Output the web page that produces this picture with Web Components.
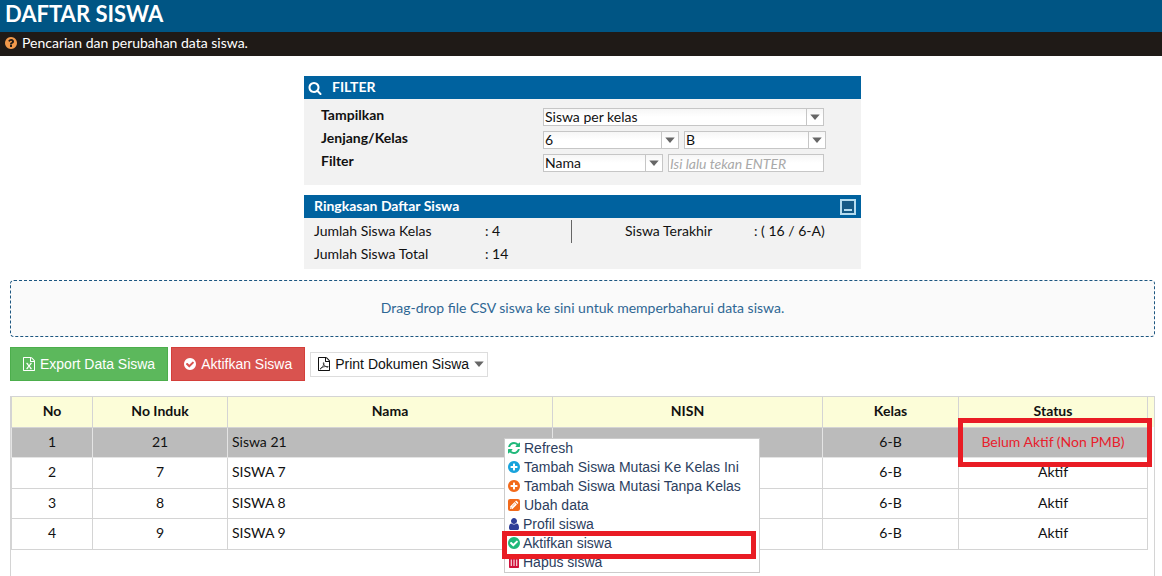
<!DOCTYPE html>
<html lang="id">
<head>
<meta charset="utf-8">
<title>Daftar Siswa</title>
<style>
  html { height: 100%; }
  body { margin: 0; min-height: 100%; display: flex; flex-direction: column; background: #fff; color: #111; font: 14px/24px Lato, sans-serif; }
  .content { flex: 1; display: flex; flex-direction: column; padding: 20px 7px 0 10px; }
  .panels { width: 557px; max-width: 100%; margin: 0 auto; display: grid; gap: 10px; position: relative; }
  csv-drop { margin-top: 11px; }
  action-bar { margin-top: 10px; }
  student-grid { margin-top: 15px; flex: 1; }
</style>
</head>
<body>
<page-banner>DAFTAR SISWA<span slot="info">Pencarian dan perubahan data siswa.</span></page-banner>
<main class="content">
  <div class="panels">
    <filter-panel></filter-panel>
    <summary-panel></summary-panel>
  </div>
  <csv-drop>Drag-drop file CSV siswa ke sini untuk memperbaharui data siswa.</csv-drop>
  <action-bar></action-bar>
  <student-grid></student-grid>
</main>
<script>
const CIRCLE = 'm0 0M1664 896q0 209-103 385.5t-279.5 279.5-385.5 103-385.5-103-279.5-279.5-103-385.5 103-385.5 279.5-279.5 385.5-103 385.5 103 279.5 279.5 103 385.5z';
const FILE = '<path d="M1596 380q28 28 48 76t20 88v1152q0 40-28 68t-68 28h-1344q-40 0-68-28t-28-68v-1600q0-40 28-68t68-28h896q40 0 88 20t76 48zm-444-244v376h376q-10-29-22-41l-313-313q-12-12-41-22zm384 1528v-1024h-416q-40 0-68-28t-28-68v-416h-768v1536h1280z"/>';
const ICONS = {
  help: `<path fill-rule="evenodd" d="M1024 1376v-192q0-14-9-23t-23-9h-192q-14 0-23 9t-9 23v192q0 14 9 23t23 9h192q14 0 23-9t9-23zm256-672q0-88-55.5-163t-138.5-116-170-41q-243 0-371 213-15 24 8 42l132 100q7 6 19 6 16 0 25-12 53-68 86-92 34-24 86-24 48 0 85.5 26t37.5 59q0 38-20 61t-68 45q-63 28-115.5 86.5t-52.5 125.5v36q0 14 9 23t23 9h192q14 0 23-9t9-23q0-19 21.5-49.5t54.5-49.5q32-18 49-28.5t46-35 44.5-48 28-60.5 12.5-81z${CIRCLE}"/>`,
  search: '<path d="M1216 832q0-185-131.5-316.5t-316.5-131.5-316.5 131.5-131.5 316.5 131.5 316.5 316.5 131.5 316.5-131.5 131.5-316.5zm512 832q0 52-38 90t-90 38q-54 0-90-38l-343-342q-179 124-399 124-143 0-273.5-55.5t-225-150-150-225-55.5-273.5 55.5-273.5 150-225 225-150 273.5-55.5 273.5 55.5 225 150 150 225 55.5 273.5q0 220-124 399l343 343q37 37 37 90z"/>',
  plus: `<path fill-rule="evenodd" d="M1344 960v-128q0-26-19-45t-45-19h-256v-256q0-26-19-45t-45-19h-128q-26 0-45 19t-19 45v256h-256q-26 0-45 19t-19 45v128q0 26 19 45t45 19h256v256q0 26 19 45t45 19h128q26 0 45-19t19-45v-256h256q26 0 45-19t19-45z${CIRCLE}"/>`,
  check: `<path fill-rule="evenodd" d="M1412 734q0-28-18-46l-91-90q-19-19-45-19t-45 19l-408 407-226-226q-19-19-45-19t-45 19l-91 90q-18 18-18 46 0 27 18 45l362 362q19 19 45 19 27 0 46-19l543-543q18-18 18-45z${CIRCLE}"/>`,
  refresh: '<path d="M1639 1056q0 5-1 7-64 268-268 434.5t-478 166.5q-146 0-282.5-55t-243.5-157l-129 129q-19 19-45 19t-45-19-19-45v-448q0-26 19-45t45-19h448q26 0 45 19t19 45-19 45l-137 137q71 66 161 102t187 36q134 0 250-65t186-179q11-17 53-117 8-23 30-23h192q13 0 22.5 9.5t9.5 22.5zm25-800v448q0 26-19 45t-45 19h-448q-26 0-45-19t-19-45 19-45l138-138q-148-137-349-137-134 0-250 65t-186 179q-11 17-53 117-8 23-30 23h-199q-13 0-22.5-9.5t-9.5-22.5v-7q65-268 270-434.5t480-166.5q146 0 284 55.5t245 156.5l130-129q19-19 45-19t45 19 19 45z"/>',
  user: '<path d="M1536 1399q0 109-62.5 187t-150.5 78h-854q-88 0-150.5-78t-62.5-187q0-85 8.5-160.5t31.5-152 58.5-131 94-89 134.5-34.5q131 128 313 128t313-128q76 0 134.5 34.5t94 89 58.5 131 31.5 152 8.5 160.5zm-256-887q0 159-112.5 271.5t-271.5 112.5-271.5-112.5-112.5-271.5 112.5-271.5 271.5-112.5 271.5 112.5 112.5 271.5z"/>',
  pencil: '<rect x="128" y="128" width="1536" height="1536" rx="270"/><path fill="#fff" d="M400 1392v-300l570-570 300 300-570 570zM1030 462l100-100q50-45 100 0l200 200q45 50 0 100l-100 100z"/><path d="M480 1140l170 170-60 30h-110zM640 1060l360-360 40 40-360 360z"/>',
  trash: '<path d="M192 256h400l80-128h448l80 128h400v128h-1408z"/><path fill-rule="evenodd" d="M256 384h1280v1180q0 100-100 100h-1080q-100 0-100-100zM480 576v832h128v-832zM832 576v832h128v-832zM1184 576v832h128v-832z"/>',
  excel: FILE + '<path fill="none" stroke="currentColor" stroke-width="150" d="M630 830l540 650M1170 830l-540 650"/><path fill="none" stroke="currentColor" stroke-width="90" d="M530 810h270M1000 810h270M530 1500h270M1000 1500h270"/>',
  pdf: FILE + '<path fill="none" stroke="currentColor" stroke-width="90" d="M390 1530q120-190 330-240 360-120 720-60 10 120-180 60-330-120-440-420-40-160 20-160 70 0 40 160-90 370-310 570-90 120-180 90z"/>',
  caret: '<path d="M192 512h1408l-704 832z"/>'
};

/* Base: attaches an open shadow root and stamps the template into it. */
class Base extends HTMLElement {
  constructor() {
    super();
    const t = document.createElement('template');
    t.innerHTML = this.template();
    this.attachShadow({ mode: 'open' }).append(t.content.cloneNode(true));
  }
}

customElements.define('ui-icon', class extends HTMLElement {
  connectedCallback() {
    if (this.shadowRoot) return;
    this.attachShadow({ mode: 'open' }).innerHTML = `
      <style>:host{display:inline-flex;width:14px;height:14px;flex:none}svg{width:100%;height:100%;overflow:visible}</style>
      <svg viewBox="0 0 1792 1792" fill="currentColor" aria-hidden="true">${ICONS[this.getAttribute('name')]}</svg>`;
  }
});

customElements.define('page-banner', class extends Base {
  template() { return `
    <style>
      :host{display:block}
      h1{margin:0;height:32px;padding:0 5px;background:#005584;color:#fff;font-size:22px;line-height:28px;font-weight:700}
      p{box-sizing:border-box;margin:0;height:24px;padding:0 4px 2px;display:flex;align-items:center;gap:4px;background:#1f1a17;color:#fff;line-height:22px}
      ui-icon{color:#f2994b}
    </style>
    <h1><slot></slot></h1>
    <p><ui-icon name="help"></ui-icon><slot name="info"></slot></p>`; }
});

customElements.define('info-panel', class extends Base {
  template() { return `
    <style>
      :host{display:block;background:#f2f2f2}
      header{display:flex;align-items:center;height:23px;padding:0 5px 0 10px;background:#00629f;color:#fff}
      h2{margin:0;flex:1;font-size:14px;line-height:21px;padding-bottom:2px;font-weight:700}
    </style>
    <header><slot name="icon"></slot><h2><slot name="title"></slot></h2><slot name="tool"></slot></header>
    <slot></slot>`; }
});

customElements.define('combo-box', class extends Base {
  template() { return `
    <style>
      :host{display:flex;box-sizing:border-box;height:18px;border:1px solid #c6c6c6;background:linear-gradient(#f6f6f6,#fff 50%);position:relative}
      select{appearance:none;flex:1;min-width:0;border:0;margin:0;padding:0 18px 0 1px;background:none;color:#111;font:14px/16px Lato,sans-serif}
      span{position:absolute;right:0;top:0;bottom:0;width:16px;border-left:1px solid #c6c6c6;display:flex;align-items:center;justify-content:center;color:#666;pointer-events:none}
      ui-icon{width:12px;height:12px}
    </style>
    <select><option></option></select><span><ui-icon name="caret"></ui-icon></span>`; }
  connectedCallback() {
    this.shadowRoot.querySelector('option').textContent = this.getAttribute('value');
    this.shadowRoot.querySelector('select').setAttribute('aria-label', this.getAttribute('label'));
  }
});

customElements.define('filter-panel', class extends Base {
  template() { return `
    <style>
      :host{display:block}
      [slot=icon]{margin:0 10px 0 -6px}
      form{display:grid;grid-template-columns:222px 1fr;row-gap:5px;padding:9px 35px 13px 17px}
      .name{font-weight:700;line-height:14px}
      .row{display:flex;gap:5px}
      .w1{width:281px}.w2{width:136px}.w3{width:142px}.w4{width:120px}
      input{box-sizing:border-box;width:156px;height:18px;margin:0;border:1px solid #c6c6c6;padding:0 1px;background:linear-gradient(#f6f6f6,#fff 50%);font:14px/16px Lato,sans-serif}
      input::placeholder{font-style:italic;line-height:14px;color:#a9a9a9}
    </style>
    <info-panel>
      <ui-icon slot="icon" name="search"></ui-icon><span slot="title">FILTER</span>
      <form>
        <span class="name">Tampilkan</span>
        <div class="row"><combo-box class="w1" label="Tampilkan" value="Siswa per kelas"></combo-box></div>
        <span class="name">Jenjang/Kelas</span>
        <div class="row"><combo-box class="w2" label="Jenjang" value="6"></combo-box><combo-box class="w3" label="Kelas" value="B"></combo-box></div>
        <label class="name" for="q">Filter</label>
        <div class="row"><combo-box class="w4" label="Filter" value="Nama"></combo-box><input id="q" placeholder="Isi lalu tekan ENTER"></div>
      </form>
    </info-panel>`; }
});

customElements.define('summary-panel', class extends Base {
  template() { return `
    <style>
      :host{display:block}
      button{width:16px;height:16px;padding:0 0 2px;border:2px solid #b5dcef;background:#155a86;display:flex;align-items:flex-end;justify-content:center}
      button::after{content:"";width:8px;height:2px;background:#b5dcef}
      dl{margin:0;padding:2px 10px 3px;display:grid;grid-template-columns:171px 86px 54px 129px 1fr;grid-auto-rows:23px;line-height:21px}
      dt,dd{margin:0}
      i{border-left:1px solid #666}
    </style>
    <info-panel>
      <span slot="title">Ringkasan Daftar Siswa</span>
      <button slot="tool" aria-label="Ciutkan"></button>
      <dl><dt>Jumlah Siswa Kelas</dt><dd>: 4</dd><i></i><dt>Siswa Terakhir</dt><dd>: ( 16 / 6-A)</dd>
      <dt>Jumlah Siswa Total</dt><dd>: 14</dd></dl>
    </info-panel>`; }
});

customElements.define('csv-drop', class extends Base {
  template() { return `
    <style>:host{display:flex;align-items:center;justify-content:center;box-sizing:border-box;height:57px;padding-bottom:2px;border:1px dashed #1c5680;border-radius:4px;background:#fafafa;color:#2f6794}</style>
    <slot></slot>`; }
});

customElements.define('action-bar', class extends Base {
  template() { return `
    <style>
      :host{display:flex;align-items:center;gap:3px;height:34px}
      button{box-sizing:border-box;height:34px;margin:0;padding:0 12px 0 11px;border:1px solid #4cae4c;background:#5cb85c;color:#fff;font:14px/20px "Liberation Sans",sans-serif;display:flex;align-items:center;gap:4px;white-space:nowrap}
      .danger{border-color:#d43f3a;background:#d9534f}
      .menu{height:25px;margin-left:2px;padding:0 2px 0 6px;border-color:#ddd;background:#fff;color:#111}
      .menu ui-icon:last-child{width:12px;height:12px;color:#666}
    </style>
    <button><ui-icon name="excel"></ui-icon>Export Data Siswa</button>
    <button class="danger"><ui-icon name="check"></ui-icon>Aktifkan Siswa</button>
    <button class="menu"><ui-icon name="pdf"></ui-icon>Print Dokumen Siswa<ui-icon name="caret"></ui-icon></button>`; }
});

customElements.define('context-menu', class extends Base {
  template() { return `
    <style>
      :host{display:block;box-sizing:border-box;width:256px;padding:0 2px;border:1px solid #ccc;background:#fff}
      menu{margin:0;padding:0;list-style:none}
      li{position:relative;display:flex;height:19px}
      button{display:flex;align-items:center;gap:3px;margin:0;padding:0;border:0;background:none;color:#2c3e5e;font:14px/19px "Liberation Sans",sans-serif;white-space:nowrap}
      .near button{gap:2px}
      ui-icon{margin-bottom:2px}
      .mark{position:absolute;inset:-3px 1px -6px -5px;border:5px solid #e91c24;pointer-events:none;z-index:1}
    </style>
    <menu>
      <li><button><ui-icon name="refresh" style="color:#1fb87a"></ui-icon>Refresh</button></li>
      <li><button><ui-icon name="plus" style="color:#18a3dc"></ui-icon>Tambah Siswa Mutasi Ke Kelas Ini</button></li>
      <li><button><ui-icon name="plus" style="color:#f26a1b"></ui-icon>Tambah Siswa Mutasi Tanpa Kelas</button></li>
      <li><button><ui-icon name="pencil" style="color:#f26a1b"></ui-icon>Ubah data</button></li>
      <li class="near"><button><ui-icon name="user" style="color:#2e3d98"></ui-icon>Profil siswa</button></li>
      <li class="near"><button><ui-icon name="check" style="color:#1fb87a"></ui-icon>Aktifkan siswa</button><span class="mark"></span></li>
      <li class="near"><button><ui-icon name="trash" style="color:#d0103a"></ui-icon>Hapus siswa</button></li>
    </menu>`; }
});

customElements.define('student-grid', class extends Base {
  template() {
    const rows = [
      ['1', '21', 'Siswa 21', '', '6-B', 'Belum Aktif (Non PMB)'],
      ['2', '7', 'SISWA 7', '', '6-B', 'Aktif'],
      ['3', '8', 'SISWA 8', '', '6-B', 'Aktif'],
      ['4', '9', 'SISWA 9', '', '6-B', 'Aktif']
    ].map((r, i) => `<tr${i ? '' : ' class="on"'}>${r.map((c, k) => `<td>${c}${!i && k === 5 ? '<span class="mark"></span>' : ''}</td>`).join('')}</tr>`).join('');
    return `
    <style>
      :host{display:block;position:relative;border:1px solid #d4d4d4;border-bottom:0}
      .scroll{padding-right:6px;background:linear-gradient(#fcfdd8,#fcfdd8) 0 0/100% 30px no-repeat}
      table{width:100%;table-layout:fixed;border-collapse:separate;border-spacing:0}
      th,td{box-sizing:border-box;height:30px;padding:0 4px 2px;border:0 solid #d4d4d4;border-width:0 1px 1px 0;text-align:center;line-height:24px}
      th{height:31px;font-weight:700}
      td:nth-child(3){text-align:left}
      th:first-child,td:first-child{border-left-width:1px}
      tr:nth-child(even) td{height:31px}
      .on td{background:#bbb;border-color:#e4e4e4}
      .on td:last-child{position:relative;color:#e8202c}
      .mark{position:absolute;inset:-10px -5px -10px -1px;border:5px solid #e91c24;pointer-events:none}
      context-menu{position:absolute;left:493px;top:41px}
    </style>
    <div class="scroll"><table>
      <colgroup><col style="width:82px"><col style="width:135px"><col><col style="width:270px"><col style="width:136px"><col style="width:189px"></colgroup>
      <thead><tr><th>No</th><th>No Induk</th><th>Nama</th><th>NISN</th><th>Kelas</th><th>Status</th></tr></thead>
      <tbody>${rows}</tbody>
    </table></div>
    <context-menu></context-menu>`;
  }
});
</script>
</body>
</html>
